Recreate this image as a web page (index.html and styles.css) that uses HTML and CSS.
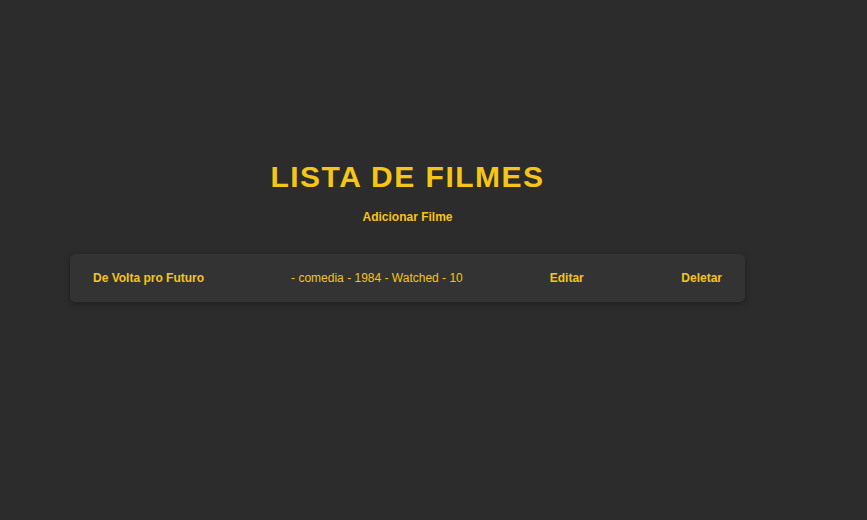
FILE: index.html
```html
<!DOCTYPE html>
<html lang="pt">
<head>
<meta charset="utf-8">
<title>Lista de Filmes</title>
<link rel="stylesheet" href="styles.css">
</head>
<body>
<main class="container">
  <h1 class="title">LISTA DE FILMES</h1>
  <a class="add-link" href="#">Adicionar Filme</a>
  <ul class="movie-list">
    <li class="movie-card">
      <span class="movie-name">De Volta pro Futuro</span>
      <span class="movie-info">- comedia - 1984 - Watched - 10</span>
      <a class="action" href="#">Editar</a>
      <a class="action action-delete" href="#">Deletar</a>
    </li>
  </ul>
</main>
</body>
</html>
```

FILE: styles.css
```css
html, body {
  margin: 0;
  padding: 0;
  background: #2c2c2c;
  height: 100%;
}
body {
  font-family: "Liberation Sans", Arial, sans-serif;
  color: #f5c518;
}
.container {
  width: 675px;
  margin-left: 70px;
  padding-top: 157px;
  display: flex;
  flex-direction: column;
  align-items: center;
}
.title {
  margin: 0;
  font-size: 30px;
  line-height: 40px;
  font-weight: bold;
  letter-spacing: 1.5px;
  color: #f5c518;
}
.add-link {
  margin-top: 13px;
  font-size: 12px;
  font-weight: bold;
  color: #f5c518;
  text-decoration: none;
  line-height: 14px;
}
.movie-list {
  list-style: none;
  margin: 30px 0 0 0;
  padding: 0;
  width: 100%;
}
.movie-card {
  display: flex;
  align-items: center;
  gap: 87px;
  background: #333333;
  border-radius: 5px;
  box-shadow: 0 2px 6px rgba(0, 0, 0, 0.3);
  padding: 0 23px;
  height: 48px;
  font-size: 12px;
}
.movie-name {
  font-weight: bold;
}
.action {
  font-weight: bold;
  color: #f5c518;
  text-decoration: none;
}
.action-delete {
  margin-left: auto;
}
```
